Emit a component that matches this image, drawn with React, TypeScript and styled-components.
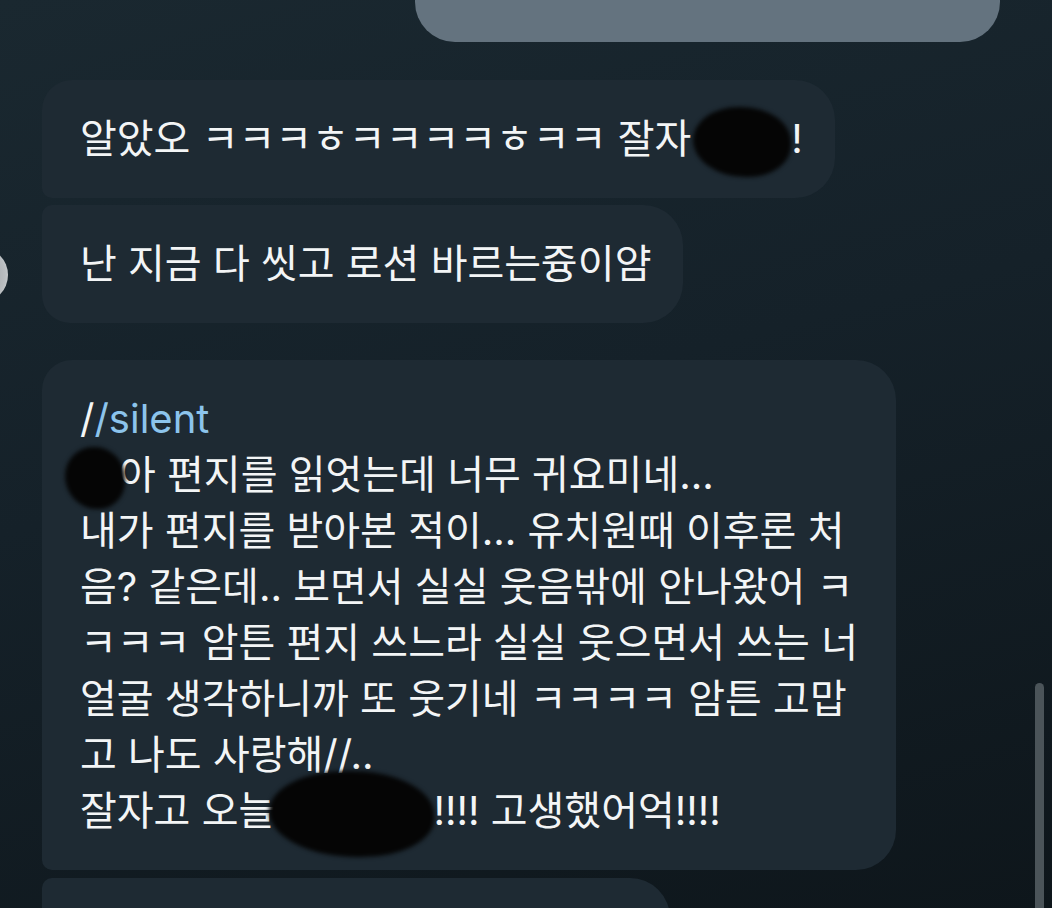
import React from "react";
import styled, { createGlobalStyle } from "styled-components";

const GlobalStyle = createGlobalStyle`
  html, body {
    margin: 0;
    padding: 0;
    background: #131e25;
  }
`;

const ChatScreen = styled.div`
  position: relative;
  width: 1052px;
  height: 908px;
  overflow: hidden;
  background: linear-gradient(165deg, #1a2830 0%, #152129 45%, #0e161b 100%);
  font-family: "Inter", "Noto Sans CJK KR", sans-serif;
  color: #f3f5f6;
`;

const MessageList = styled.div`
  display: flex;
  flex-direction: column;
`;

const OutgoingRow = styled.div`
  display: flex;
  justify-content: flex-end;
  padding-right: 52px;
  margin-bottom: 38px;
`;

const OutgoingBubble = styled.div`
  width: 585px;
  height: 42px;
  background: #64737f;
  border-radius: 0 0 40px 40px;
`;

const IncomingRow = styled.div<{ gap: number }>`
  display: flex;
  align-items: flex-end;
  margin-bottom: ${(p) => p.gap}px;
`;

const Gutter = styled.div`
  width: 42px;
  flex-shrink: 0;
  overflow: hidden;
  display: flex;
  align-items: flex-end;
`;

const Avatar = styled.div`
  width: 56px;
  height: 56px;
  flex-shrink: 0;
  margin-left: -48px;
  margin-bottom: 20px;
  border-radius: 50%;
  background: radial-gradient(circle at 40% 50%, #8a8f92 0%, #b9bdc0 70%, #e6e8e9 100%);
`;

const Bubble = styled.div<{ tl: number; bl: number; width?: number }>`
  background: #1e2a33;
  padding: 31px 32px 31px 38px;
  border-radius: ${(p) => `${p.tl}px 40px 40px ${p.bl}px`};
  width: ${(p) => (p.width ? `${p.width}px` : "fit-content")};
  box-sizing: border-box;
  font-size: 40px;
  line-height: 56px;
`;

const Line = styled.div`
  white-space: nowrap;
  height: 56px;
`;

const Slash = styled.span`
  color: #f3f5f6;
`;

const Command = styled.span`
  color: #8cc4ec;
`;

const Redaction = styled.span<{ w: number; h: number; ml?: number; mr?: number }>`
  display: inline-block;
  vertical-align: middle;
  width: ${(p) => p.w}px;
  height: ${(p) => p.h}px;
  margin: ${(p) => `${-(p.h - 56) / 2}px ${p.mr ?? 0}px ${-(p.h - 56) / 2}px ${p.ml ?? 0}px`};
  background: #050505;
  border-radius: 48% 52% 45% 55%;
  filter: blur(2px);
`;

const Scrollbar = styled.div`
  position: absolute;
  right: 8px;
  top: 683px;
  bottom: -10px;
  width: 9px;
  border-radius: 5px;
  background: #4b5459;
`;

export default function App() {
  return (
    <ChatScreen>
      <GlobalStyle />
      <MessageList>
        <OutgoingRow>
          <OutgoingBubble />
        </OutgoingRow>

        <IncomingRow gap={7}>
          <Gutter />
          <Bubble tl={30} bl={10}>
            <Line>
              알았오 ㅋㅋㅋㅎㅋㅋㅋㅋㅎㅋㅋ 잘자
              <Redaction w={98} h={70} ml={2} mr={0} />!
            </Line>
          </Bubble>
        </IncomingRow>

        <IncomingRow gap={37}>
          <Gutter>
            <Avatar />
          </Gutter>
          <Bubble tl={10} bl={28}>
            <Line>난 지금 다 씻고 로션 바르는즁이얌</Line>
          </Bubble>
        </IncomingRow>

        <IncomingRow gap={8}>
          <Gutter />
          <Bubble tl={30} bl={10} width={854}>
            <Line>
              <Slash>/</Slash>
              <Command>/silent</Command>
            </Line>
            <Line>
              <Redaction w={60} h={62} ml={-15} mr={-6} />아 편지를 읽엇는데 너무 귀요미네...
            </Line>
            <Line>내가 편지를 받아본 적이... 유치원때 이후론 처</Line>
            <Line>음? 같은데.. 보면서 실실 웃음밖에 안나왔어 ㅋ</Line>
            <Line>ㅋㅋㅋ 암튼 편지 쓰느라 실실 웃으면서 쓰는 너</Line>
            <Line>얼굴 생각하니까 또 웃기네 ㅋㅋㅋㅋ 암튼 고맙</Line>
            <Line>고 나도 사랑해//..</Line>
            <Line>
              잘자고 오늘 <Redaction w={165} h={86} ml={-18} mr={0} />!!!! 고생했어억!!!!
            </Line>
          </Bubble>
        </IncomingRow>

        <IncomingRow gap={0}>
          <Gutter />
          <Bubble tl={10} bl={10} width={628}>
            <Line />
          </Bubble>
        </IncomingRow>
      </MessageList>
      <Scrollbar />
    </ChatScreen>
  );
}
